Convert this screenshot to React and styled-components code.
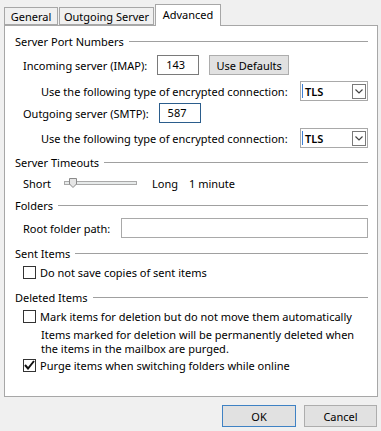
import React from "react";
import styled, { createGlobalStyle } from "styled-components";

const Global = createGlobalStyle`
  html, body {
    margin: 0;
    background: #f0f0f0;
  }
  body {
    font-family: "Noto Sans", "Open Sans", sans-serif;
    font-size: 11px;
    color: #000;
  }
`;

const Window = styled.div`
  width: 381px;
  height: 431px;
  padding: 5px 4px 0 4px;
  box-sizing: border-box;
`;

const TabStrip = styled.div`
  display: flex;
  align-items: flex-end;
  height: 20px;
  position: relative;
  z-index: 1;
`;

const Tab = styled.div`
  box-sizing: border-box;
  width: ${(p) => p.$w}px;
  height: ${(p) => (p.$active ? "22px" : "18px")};
  margin-bottom: ${(p) => (p.$active ? "-1px" : "0")};
  padding-top: ${(p) => (p.$active ? "2px" : "1px")};
  border: 1px solid #a7a7a7;
  border-bottom: ${(p) => (p.$active ? "none" : "1px solid #a7a7a7")};
  margin-right: ${(p) => (p.$active ? "0" : "1px")};
  background: ${(p) => (p.$active ? "#fff" : "#f0f0f0")};
  white-space: nowrap;
  text-align: center;
  line-height: 15px;
`;

const Panel = styled.div`
  box-sizing: border-box;
  width: 374px;
  height: 372px;
  border: 1px solid #a7a7a7;
  background: #fff;
  padding: 7px 9px 0 10px;
`;

const Header = styled.div`
  display: flex;
  align-items: center;
  height: 16px;
  margin-top: ${(p) => p.$top || 0}px;
  &::after {
    content: "";
    flex: 1;
    height: 1px;
    margin-left: 5px;
    background: #a0a0a0;
  }
`;

const Row = styled.div`
  display: flex;
  align-items: center;
  height: ${(p) => p.$h || 20}px;
  margin-top: ${(p) => p.$top || 0}px;
  padding-left: ${(p) => p.$indent || 8}px;
`;

const Label = styled.span`
  white-space: nowrap;
  margin-left: ${(p) => p.$left || 0}px;
`;

const TextBox = styled.div`
  box-sizing: border-box;
  width: ${(p) => p.$w || 42}px;
  height: 20px;
  margin-left: ${(p) => p.$left || 0}px;
  border: 1px solid ${(p) => (p.$focus ? "#2b5d8c" : p.$light ? "#a9a9a9" : "#7a7a7a")};
  background: #fff;
  padding: 1px 0 0 8px;
  line-height: 16px;
  flex: ${(p) => (p.$grow ? 1 : "none")};
`;

const Button = styled.div`
  box-sizing: border-box;
  flex: none;
  width: ${(p) => p.$w}px;
  height: ${(p) => p.$h || 22}px;
  margin-left: ${(p) => p.$left || 0}px;
  border: 1px solid ${(p) => (p.$primary ? "#3f82c4" : "#adadad")};
  background: #e1e1e1;
  display: flex;
  align-items: center;
  justify-content: center;
`;

const Select = styled.div`
  box-sizing: border-box;
  flex: none;
  width: 68px;
  height: 20px;
  margin-left: auto;
  border: 1px solid #a9a9a9;
  background: #fff;
  display: flex;
  align-items: center;
  padding: 0 1px;
  font-weight: 600;
`;

const Caret = styled.span`
  width: 1px;
  height: 14px;
  background: #3c7fd6;
  margin-right: 2px;
`;

const Arrow = styled.div`
  box-sizing: border-box;
  margin-left: auto;
  width: 14px;
  height: 15px;
  border: 1px solid #7a7a7a;
  display: flex;
  align-items: center;
  justify-content: center;
`;

const Slider = styled.div`
  position: relative;
  flex: none;
  width: 73px;
  height: 4px;
  margin-left: ${(p) => p.$left}px;
  box-sizing: border-box;
  border: 1px solid #a9a9a9;
  background: #e7eaea;
`;

const Thumb = styled.svg`
  position: absolute;
  left: 4px;
  top: -4px;
`;

const Box = styled.div`
  box-sizing: border-box;
  flex: none;
  width: 13px;
  height: 13px;
  border: 1px solid #333;
  background: #fff;
  margin-right: 4px;
  display: flex;
  align-items: center;
  justify-content: center;
`;

const Note = styled.div`
  margin-top: 4px;
  padding-left: 26px;
  line-height: 14px;
  white-space: nowrap;
`;

const Footer = styled.div`
  display: flex;
  justify-content: flex-end;
  gap: 8px;
  margin-top: 8px;
  width: 373px;
`;

function Chevron() {
  return (
    <svg width="8" height="5" viewBox="0 0 8 5">
      <path d="M0.5 0.5 L4 4 L7.5 0.5" fill="none" stroke="#444" strokeWidth="1.2" />
    </svg>
  );
}

function Check({ checked }) {
  return (
    <Box>
      {checked && (
        <svg width="11" height="10" viewBox="0 0 11 10">
          <path d="M1 5 L4 8.5 L10 1" fill="none" stroke="#111" strokeWidth="2" />
        </svg>
      )}
    </Box>
  );
}

function Encryption({ top }) {
  return (
    <Row $indent={26} $top={top}>
      <Label>Use the following type of encrypted connection:</Label>
      <Select>
        <Caret />
        TLS
        <Arrow>
          <Chevron />
        </Arrow>
      </Select>
    </Row>
  );
}

export default function App() {
  return (
    <Window>
      <Global />
      <TabStrip>
        <Tab $w={54}>General</Tab>
        <Tab $w={95}>Outgoing Server</Tab>
        <Tab $w={66} $active>Advanced</Tab>
      </TabStrip>
      <Panel>
        <Header>Server Port Numbers</Header>
        <Row $top={6}>
          <Label>Incoming server (IMAP):</Label>
          <TextBox $left={10}>143</TextBox>
          <Button $w={80} $h={20} $left={10}>Use Defaults</Button>
        </Row>
        <Encryption top={6} />
        <Row $top={2}>
          <Label>Outgoing server (SMTP):</Label>
          <TextBox $left={10} $focus>587</TextBox>
        </Row>
        <Encryption top={5} />

        <Header $top={6}>Server Timeouts</Header>
        <Row $top={5} $h={16}>
          <Label>Short</Label>
          <Slider $left={13}>
            <Thumb width="8" height="10" viewBox="0 0 8 10">
              <path d="M0.5 0.5 H7.5 V6 L4 9.5 L0.5 6 Z" fill="#e5e5e5" stroke="#8a8a8a" />
            </Thumb>
          </Slider>
          <Label $left={15}>Long</Label>
          <Label $left={11}>1 minute</Label>
        </Row>

        <Header $top={6}>Folders</Header>
        <Row $top={5}>
          <Label>Root folder path:</Label>
          <TextBox $left={11} $grow $light />
        </Row>

        <Header $top={7}>Sent Items</Header>
        <Row $top={3} $h={16}>
          <Check />
          <Label>Do not save copies of sent items</Label>
        </Row>

        <Header $top={9}>Deleted Items</Header>
        <Row $top={3} $h={16}>
          <Check />
          <Label>Mark items for deletion but do not move them automatically</Label>
        </Row>
        <Note>
          Items marked for deletion will be permanently deleted when
          <br />
          the items in the mailbox are purged.
        </Note>
        <Row $top={1} $h={16}>
          <Check checked />
          <Label>Purge items when switching folders while online</Label>
        </Row>
      </Panel>
      <Footer>
        <Button $w={74} $primary>OK</Button>
        <Button $w={73}>Cancel</Button>
      </Footer>
    </Window>
  );
}
